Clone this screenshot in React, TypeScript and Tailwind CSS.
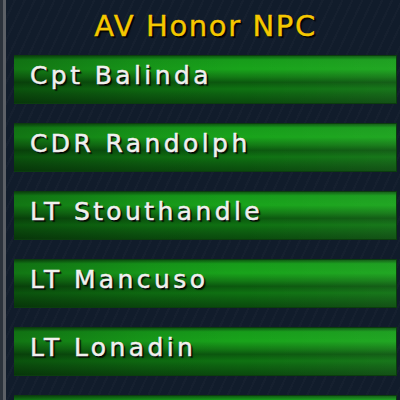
const npcs = ["Cpt Balinda", "CDR Randolph", "LT Stouthandle", "LT Mancuso", "LT Lonadin", ""];

function NpcBar({ name }: { name: string }) {
  return (
    <div className="relative h-[49px] shrink-0 overflow-hidden border-y border-r border-[#0b3d0e] bg-[linear-gradient(180deg,#0e5c12_0%,#179c1a_8%,#19a41b_28%,#137c15_44%,#0b580e_56%,#0f7212_70%,#0d6010_82%,#0a4a0d_100%)]">
      <div className="absolute inset-0 bg-[linear-gradient(90deg,rgba(0,0,0,0.28)_0%,rgba(0,0,0,0.08)_35%,rgba(0,0,0,0)_60%,rgba(255,255,255,0.04)_100%)]" />
      {name && (
        <div className="relative pl-[16px] pt-[7px] font-['DejaVu_Sans',sans-serif] text-[25px] leading-[25px] tracking-[3.4px] text-[#f0f0ee] [-webkit-text-stroke:0.5px_#f0f0ee] [text-shadow:1px_1px_0_#000,2px_2px_1px_rgba(0,0,0,0.7)] whitespace-nowrap">
          {name}
        </div>
      )}
    </div>
  );
}

export default function App() {
  return (
    <div className="flex h-[400px] w-[400px] overflow-hidden bg-[#121d2c]">
      {/* frame edge */}
      <div className="w-[3px] shrink-0 bg-[#2c333c]" />
      <div className="w-[3px] shrink-0 bg-[#5c6066]" />
      <div className="flex min-w-0 flex-1 flex-col bg-[#111c2b] bg-[repeating-linear-gradient(115deg,rgba(255,255,255,0)_0px,rgba(255,255,255,0)_7px,rgba(255,255,255,0.02)_7px,rgba(255,255,255,0.02)_9px)] pl-[8px] pr-[3px]">
        <div className="h-[55px] shrink-0 pt-[12px] text-center font-['DejaVu_Sans',sans-serif] text-[29px] leading-[29px] tracking-[1.6px] text-[#f5c800] [-webkit-text-stroke:0.4px_#f5c800] [text-shadow:1px_1px_0_#000,2px_2px_1px_rgba(0,0,0,0.8)]">
          AV Honor NPC
        </div>
        <div className="flex flex-col gap-[19px]">
          {npcs.map((n, i) => (
            <NpcBar key={i} name={n} />
          ))}
        </div>
      </div>
    </div>
  );
}
